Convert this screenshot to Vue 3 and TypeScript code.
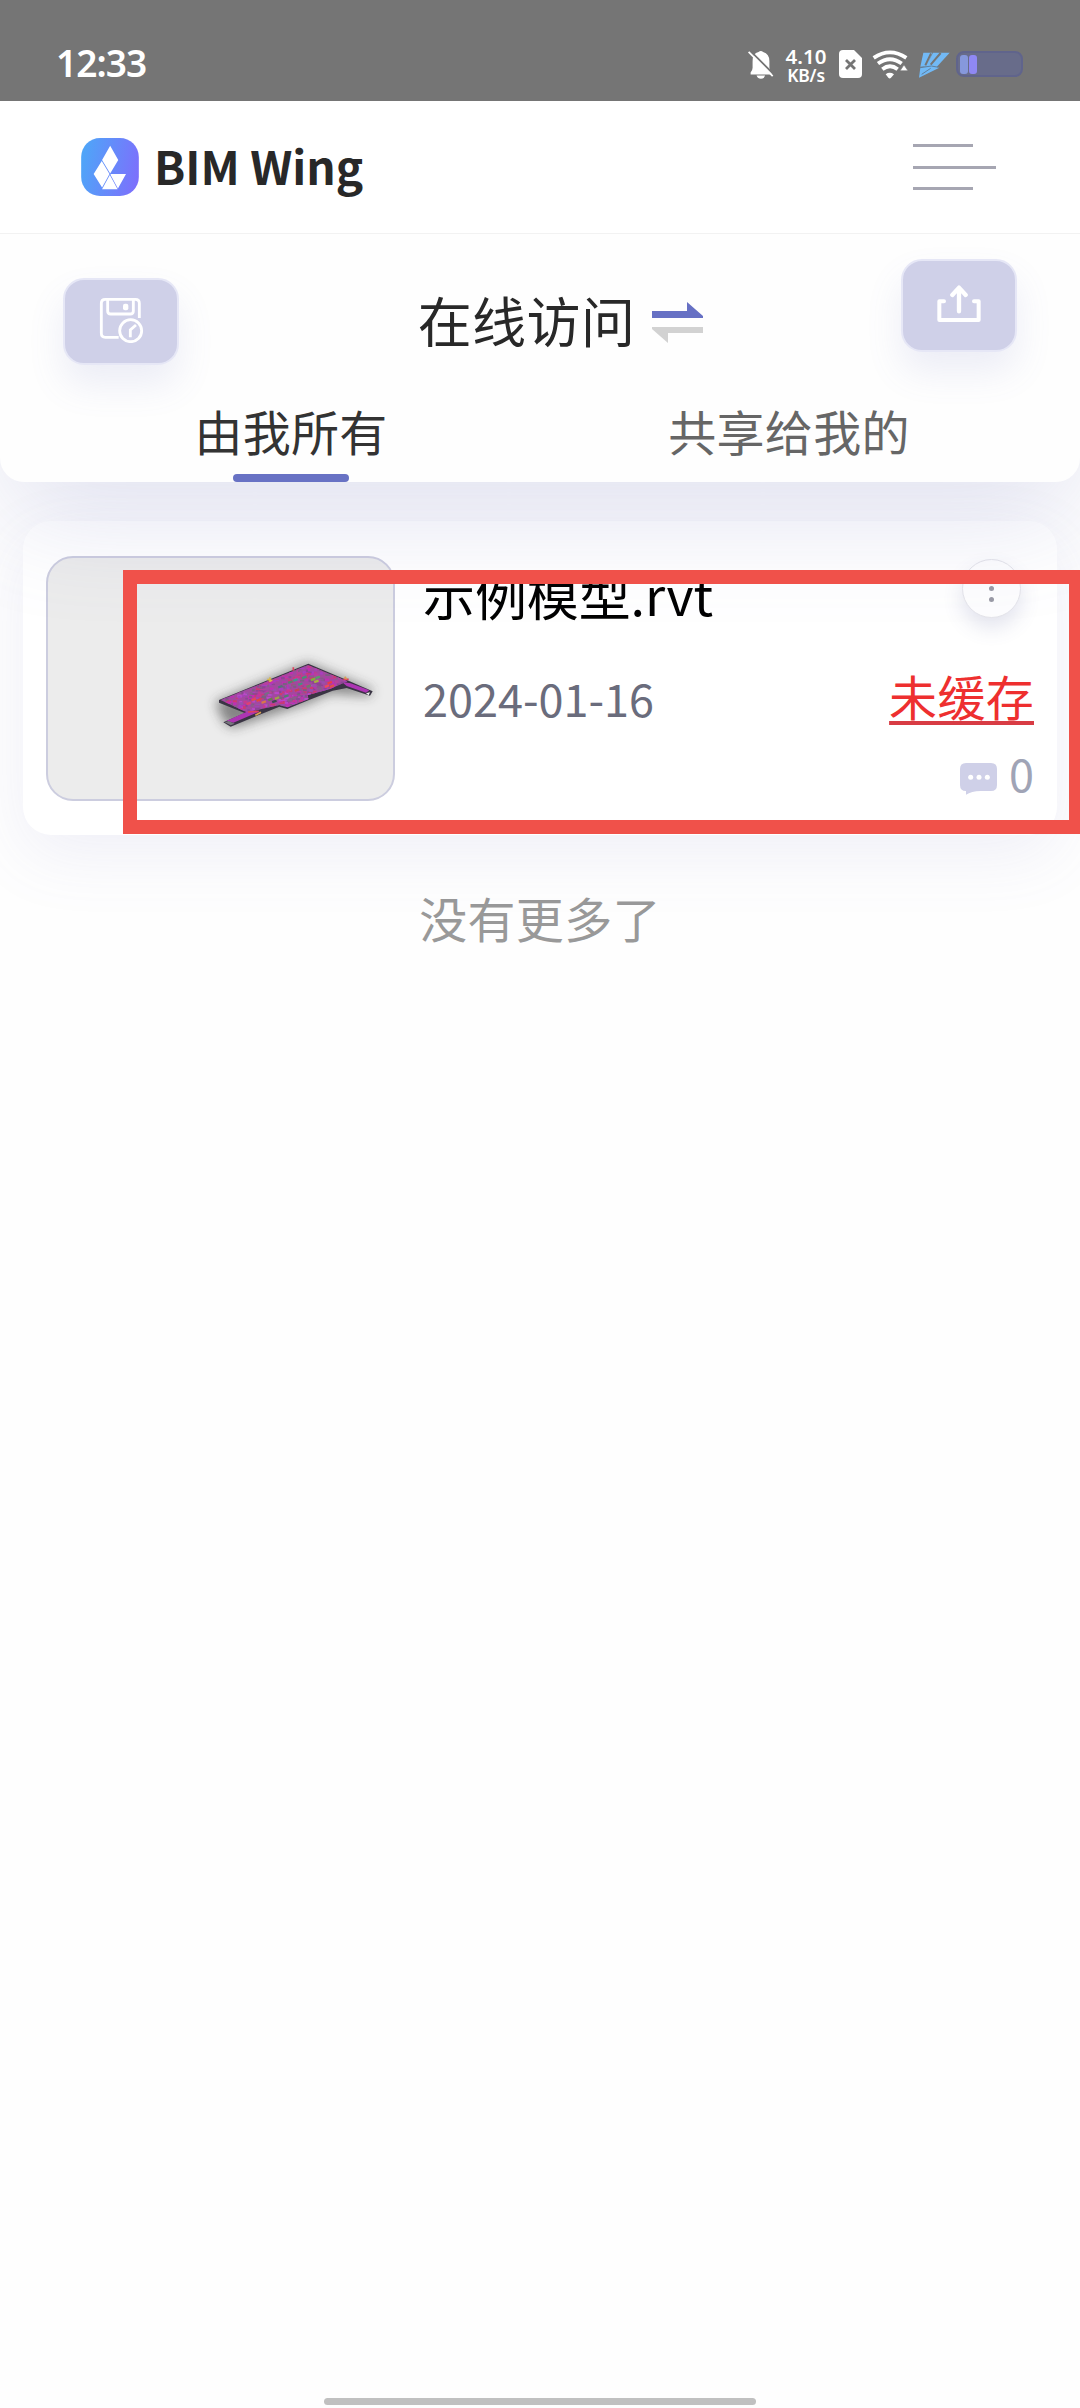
<script setup lang="ts">
interface Speck {
  x: number
  y: number
  w: number
  h: number
  color: string
}

const tabs = [
  { label: '由我所有', active: true },
  { label: '共享给我的', active: false },
]

const model = { name: '示例模型.rvt', date: '2024-01-16', cache: '未缓存', comments: 0 }

// Small coloured parts scattered over the model's floor plate
const palette = ['#c02fb4', '#a83fc0', '#c8388e', '#8a5c8c', '#b848c8', '#cc3a70', '#7a6080', '#9a4fae', '#b8409c', '#8c4494']
const specks: Speck[] = []
let seed = 7
function rand(): number {
  seed = (seed * 16807) % 2147483647
  return seed / 2147483647
}
for (let i = 0; i < 900; i++) {
  specks.push({
    x: 115 + rand() * 400,
    y: 72 + rand() * 150,
    w: 5 + rand() * 11,
    h: 3 + rand() * 6,
    color: palette[Math.floor(rand() * palette.length)],
  })
}
const accents: [number, number, string][] = [
  [345, 120, '#3f9a86'], [360, 132, '#4a8f80'], [330, 126, '#57806f'], [398, 118, '#7fae3c'], [408, 124, '#a8b040'],
  [412, 112, '#5a9c68'], [270, 178, '#6a7a50'], [282, 184, '#3c4a50'], [235, 180, '#e0483c'], [250, 186, '#d87848'],
  [448, 128, '#e83c48'], [440, 138, '#f04858'], [455, 138, '#e05048'], [220, 178, '#e04858'], [300, 140, '#58707a'],
  [318, 168, '#4f7f70'], [260, 160, '#786c88'], [372, 112, '#488c7c'], [290, 174, '#a0a048'], [205, 190, '#e04070'],
  [385, 138, '#707c68'], [350, 150, '#c84058'],
]
</script>

<template>
  <div class="screen">
    <div class="status">
      <span class="time">12:33</span>
      <div class="status-icons">
        <svg class="bell" viewBox="54 88 80 88">
          <path d="M64 160 V156 Q70 150 70 142 V122 Q70 98 88 94 Q95 88 102 94 Q121 99 121 122 V142 Q121 150 128 157 V162 H64Z M82 165 H108 Q105 175 95 175 Q86 175 82 165Z" fill="#fff" />
          <path d="M62 90 L134 162" stroke="#757575" stroke-width="6" />
          <path d="M58 94 L131 167" stroke="#fff" stroke-width="5.5" />
        </svg>
        <div class="speed"><span class="rate">4.10</span><span class="unit">KB/s</span></div>
        <svg class="sim" viewBox="0 0 23 28">
          <path d="M4 0H15L23 8V24Q23 28 19 28H4Q0 28 0 24V4Q0 0 4 0Z" fill="#fff" />
          <path d="M7 10L16 19M16 10L7 19" stroke="#757575" stroke-width="2.8" />
        </svg>
        <svg class="wifi" viewBox="432 90 108 86">
          <g fill="none" stroke="#fff" stroke-width="11.5">
            <path d="M437 113 Q486 80 535 113" />
            <path d="M450 130 Q486 104 521 130" />
            <path d="M463 147 Q486 129 509 147" />
          </g>
          <path d="M473 162 Q485 154 498 162 L489 173 Q485 177 481 173Z" fill="#fff" />
          <path d="M516 152 L528 134 L540 152Z" fill="#fff" stroke="#757575" stroke-width="2" />
        </svg>
        <svg class="vee" viewBox="566 96 96 78">
          <path d="M582 98 H609 L597 126 L611 98 H661 L622 141 L630 143 L569 173 L573 143 L592 139 L573 140Z" fill="#72b9f5" />
          <path d="M605 100L588 136M634 99L604 134" stroke="#757575" stroke-width="6" />
          <path d="M573 143L606 138L628 142M577 163L604 145" stroke="#5f7f9c" stroke-width="3" fill="none" />
        </svg>
        <div class="battery"><i></i><i></i></div>
      </div>
    </div>

    <header class="brandbar">
      <div class="brand">
        <svg class="logo" viewBox="0 0 171 172">
          <defs>
            <linearGradient id="brand" x1="0" y1="0.4" x2="1" y2="0.6">
              <stop offset="0" stop-color="#4fa5f8" />
              <stop offset="1" stop-color="#7c70fc" />
            </linearGradient>
          </defs>
          <rect width="171" height="172" rx="56" fill="url(#brand)" />
          <path d="M86 23L110 65L86 105L62 65Z M61 68L84 107L62 147L37 107Z M88 107H133L109 150L87 109Z M85 110L108 152H62Z" fill="#fff" />
        </svg>
        <span class="brand-name">BIM Wing</span>
      </div>
      <div class="menu"><i></i><i></i><i></i></div>
    </header>

    <section class="panel">
      <div class="tools">
        <button class="tool save">
          <svg width="45" height="46" viewBox="173 169 135 138" fill="none" stroke="#fff" stroke-width="8.5">
            <path d="M232 290H192Q180 290 180 278V188Q180 176 192 176H282Q294 176 294 188V232" />
            <path d="M199 178V211Q199 220 208 220H267Q276 220 276 211V178" />
            <rect x="245" y="189" width="16" height="20" rx="6" fill="#fff" stroke="none" />
            <circle cx="268" cy="270" r="33" />
            <path d="M284 253L267 268V290" />
          </svg>
        </button>
        <div class="mode">
          <span>在线访问</span>
          <svg width="51" height="41" viewBox="0 0 51 41">
            <path d="M0 9H35V0L51 14V16H0Z" fill="#6670c4" />
            <path d="M51 25H0V27L16 41V31H51Z" fill="#d2d2d2" />
          </svg>
        </div>
        <button class="tool upload">
          <svg width="44" height="38" viewBox="229 497 132 114" fill="none" stroke="#fff" stroke-width="12" stroke-linecap="round">
            <path d="M250 546H236V602H354V546H340" stroke-linejoin="round" />
            <path d="M295 576V506M275 527L295 505L315 527" stroke-width="13" stroke-linejoin="round" />
          </svg>
        </button>
      </div>
      <nav class="tabs">
        <div v-for="t in tabs" :key="t.label" class="tab" :class="{ active: t.active }">
          <span>{{ t.label }}</span>
        </div>
      </nav>
    </section>

    <main class="list">
      <article class="card">
        <div class="thumb">
          <svg viewBox="-396 -246 1035 723">
            <defs>
              <clipPath id="plate">
                <path d="M122 180L384 75L502 124L450 147L382 166L386 177L322 202L298 195L200 217Z" />
              </clipPath>
              <filter id="soft" x="-30%" y="-40%" width="160%" height="180%"><feGaussianBlur stdDeviation="18" /></filter>
              <filter id="blend"><feGaussianBlur stdDeviation="2" /></filter>
            </defs>
            <path d="M105 186L382 68L580 150L570 168L450 160L385 190L155 264L130 244Z" fill="#333" opacity="0.55" filter="url(#soft)" />
            <path d="M117 180L385 71L502 121L578 154L570 167L500 144L458 152L387 180L322 207L298 200L152 260L130 247L194 219L117 188Z" fill="#3a3444" />
            <path d="M140 242L204 214L240 214L160 248Z M485 125L512 130L568 151L558 158L500 138Z" fill="#ad35b3" />
            <g clip-path="url(#plate)">
              <rect x="110" y="65" width="420" height="165" fill="#a2489f" />
              <g filter="url(#blend)">
                <rect v-for="(s, i) in specks" :key="i" :x="s.x" :y="s.y" :width="s.w" :height="s.h" :fill="s.color" />
                <rect v-for="(a, i) in accents" :key="'a' + i" :x="a[0] - 6" :y="a[1] - 3" width="14" height="7" :fill="a[2]" :transform="`rotate(-20 ${a[0]} ${a[1]})`" />
              </g>
            </g>
            <path d="M262 118L277 122M270 112V126" stroke="#d8b848" stroke-width="5" />
            <path d="M340 82V92M204 216L236 214M490 118H506" stroke="#e0405c" stroke-width="5" />
            <path d="M226 226L243 217M494 110L500 118" stroke="#d8a050" stroke-width="5" />
            <path d="M134 247L152 256L164 251L146 243Z" fill="#77757d" />
            <path d="M558 160L570 157L566 166Z" fill="#f0f0f0" />
          </svg>
        </div>
        <div class="info">
          <div class="row name-row">
            <span class="name">{{ model.name }}</span>
            <button class="more"><i></i><i></i><i></i></button>
          </div>
          <div class="row date-row">
            <span class="date">{{ model.date }}</span>
            <a class="cache">{{ model.cache }}</a>
          </div>
          <div class="row comment-row">
            <svg width="37" height="32" viewBox="0 0 111 96">
              <path d="M18 0H93Q111 0 111 18V66Q111 84 93 84H62Q34 85 18 95V84Q0 84 0 66V18Q0 0 18 0Z" fill="#cfd0e8" />
              <circle cx="32" cy="43" r="7.5" fill="#fff" /><circle cx="57" cy="43" r="7.5" fill="#fff" /><circle cx="82" cy="43" r="7.5" fill="#fff" />
            </svg>
            <span>{{ model.comments }}</span>
          </div>
        </div>
        <div class="highlight"></div>
      </article>
      <p class="end">没有更多了</p>
    </main>
    <div class="home"></div>
  </div>
</template>

<style>
body {
  margin: 0;
  background: #fefefe;
}
</style>

<style scoped>
.screen {
  width: 1080px;
  height: 2408px;
  box-sizing: border-box;
  display: flex;
  flex-direction: column;
  overflow: hidden;
  background: #fefefe;
  font-family: "Noto Sans CJK SC", sans-serif;
}
button {
  border: 0;
  padding: 0;
  font: inherit;
}
.status {
  flex: none;
  height: 101px;
  box-sizing: border-box;
  padding: 26px 57px 0 56px;
  display: flex;
  justify-content: space-between;
  background: #757575;
  color: #fff;
  font-family: "Noto Sans", sans-serif;
}
.time {
  font-size: 37px;
  line-height: 76px;
  height: 76px;
  margin-top: -1px;
  font-weight: 600;
  letter-spacing: -0.9px;
}
.status-icons {
  display: flex;
  align-items: center;
  height: 76px;
}
.bell { width: 27px; height: 29px; }
.speed {
  width: 42px;
  margin: 3px 0 0 11px;
  display: flex;
  flex-direction: column;
  align-items: center;
  font-weight: 600;
  white-space: nowrap;
}
.rate { font-size: 20.5px; line-height: 20px; }
.unit { font-size: 17.5px; line-height: 19px; letter-spacing: -0.2px; }
.sim { width: 23px; height: 28px; margin-left: 12px; }
.wifi { width: 36px; height: 29px; margin-left: 10px; }
.vee { width: 32px; height: 26px; margin: 2px 0 0 10px; }
.battery {
  width: 67px;
  height: 26px;
  margin-left: 6px;
  box-sizing: border-box;
  border: 2px solid #60648c;
  border-radius: 8px;
  background: #686c8a;
  display: flex;
  align-items: center;
  padding-left: 2px;
  gap: 1px;
}
.battery i {
  width: 8px;
  height: 19px;
  border-radius: 3px;
  background: #8698dc;
}
.battery i + i { background: #8f88f4; }

.brandbar {
  flex: none;
  height: 133px;
  box-sizing: border-box;
  border-bottom: 1px solid #f2f2f2;
  padding: 0 84px 0 81px;
  display: flex;
  align-items: center;
  justify-content: space-between;
  background: #fff;
  position: relative;
  z-index: 3;
}
.brand { display: flex; align-items: center; }
.logo { width: 58px; height: 58px; }
.brand-name {
  margin: -4px 0 0 15px;
  font-size: 46px;
  line-height: 60px;
  font-weight: 700;
  color: #282828;
}
.menu {
  width: 83px;
  display: flex;
  flex-direction: column;
  gap: 18.5px;
}
.menu i { height: 3px; width: 60px; background: #a6a6b2; }
.menu i:nth-child(2) { width: 83px; }

.panel {
  flex: none;
  height: 248px;
  background: #fefefe;
  border-radius: 0 0 24px 24px;
  position: relative;
  z-index: 2;
}
.panel::after {
  content: "";
  position: absolute;
  inset: 0;
  z-index: -1;
  border-radius: inherit;
  box-shadow: 0 40px 110px -6px rgba(100, 108, 180, 0.19);
}
.tools {
  height: 150px;
  padding: 0 63px;
  display: flex;
  align-items: flex-start;
  justify-content: space-between;
}
.tool {
  width: 116px;
  box-sizing: border-box;
  border: 2px solid #e6e7f6;
  border-radius: 21px;
  background: #cfd0e8;
  box-shadow: 0 20px 36px rgba(104, 112, 190, 0.12);
  display: flex;
  justify-content: center;
}
.save { height: 87px; margin-top: 44px; padding-top: 17px; }
.upload { height: 93px; margin-top: 25px; padding-top: 24px; }
.mode {
  margin: 46px 0 0 41px;
  display: flex;
  align-items: center;
  gap: 17px;
  font-size: 54px;
  line-height: 80px;
  height: 80px;
  letter-spacing: 0.4px;
  color: #282828;
}
.mode svg { margin-top: 4px; }
.tabs {
  display: flex;
  padding: 0 42px;
}
.tab {
  flex: 1;
  height: 98px;
  display: flex;
  flex-direction: column;
  align-items: center;
  font-size: 48px;
  line-height: 92px;
  letter-spacing: 0.3px;
  color: #666;
}
.tab.active { color: #333; }
.tab span { height: 90px; }
.tab.active::after {
  content: "";
  width: 116px;
  height: 8px;
  border-radius: 4px;
  background: #6872c4;
}

.list {
  flex: 1;
  padding: 39px 23px 0;
}
.card {
  position: relative;
  height: 314px;
  box-sizing: border-box;
  padding: 35px 23px 0;
  border-radius: 28px;
  background: #fff;
  box-shadow: 0 20px 66px rgba(104, 112, 190, 0.1);
  display: flex;
}
.thumb {
  flex: none;
  width: 349px;
  height: 245px;
  box-sizing: border-box;
  border: 2px solid #cccddf;
  border-radius: 27px;
  overflow: hidden;
  background: #ececec;
}
.thumb svg { display: block; width: 345px; height: 241px; }
.info {
  flex: 1;
  padding-left: 28px;
  display: flex;
  flex-direction: column;
}
.row {
  display: flex;
  align-items: center;
  justify-content: space-between;
}
.name-row { height: 76px; }
.name { font-size: 52px; line-height: 76px; letter-spacing: -0.1px; color: #000; }
.more {
  width: 59px;
  height: 59px;
  margin: -11px 13px 0 0;
  box-sizing: border-box;
  border: 1px solid #e4e4ea;
  border-radius: 50%;
  background: #fdfdfe;
  box-shadow: 0 10px 20px rgba(80, 90, 150, 0.16);
  display: flex;
  flex-direction: column;
  align-items: center;
  justify-content: center;
  gap: 6px;
}
.more i { width: 5px; height: 5px; border-radius: 50%; background: #9a9aa6; }
.date-row { height: 131px; }
.date { font-size: 45px; color: #6a6c7c; }
.cache {
  font-size: 48px;
  letter-spacing: 0.3px;
  color: #ee2f2f;
  text-decoration: underline #d83c44 4px;
  text-underline-offset: 5px;
  text-decoration-skip-ink: none;
  margin-top: -5px;
}
.comment-row {
  height: 20px;
  justify-content: flex-end;
  font-size: 45px;
  line-height: 20px;
  color: #a0a4b6;
}
.comment-row svg { margin: 12px 12px 0 0; }
/* Call-out frame lying over the card; its right side runs off the screen */
.highlight {
  position: absolute;
  left: 100px;
  top: 49px;
  width: 960px;
  height: 264px;
  box-sizing: border-box;
  border: 14px solid #f0514a;
  z-index: 5;
}
.end {
  margin: 47px 0 0;
  text-align: center;
  font-size: 48px;
  line-height: 70px;
  letter-spacing: 0.3px;
  color: #999;
}
.home {
  flex: none;
  width: 432px;
  height: 7px;
  margin: 0 auto 3px;
  border-radius: 4px;
  background: #c0c0c0;
}
</style>
